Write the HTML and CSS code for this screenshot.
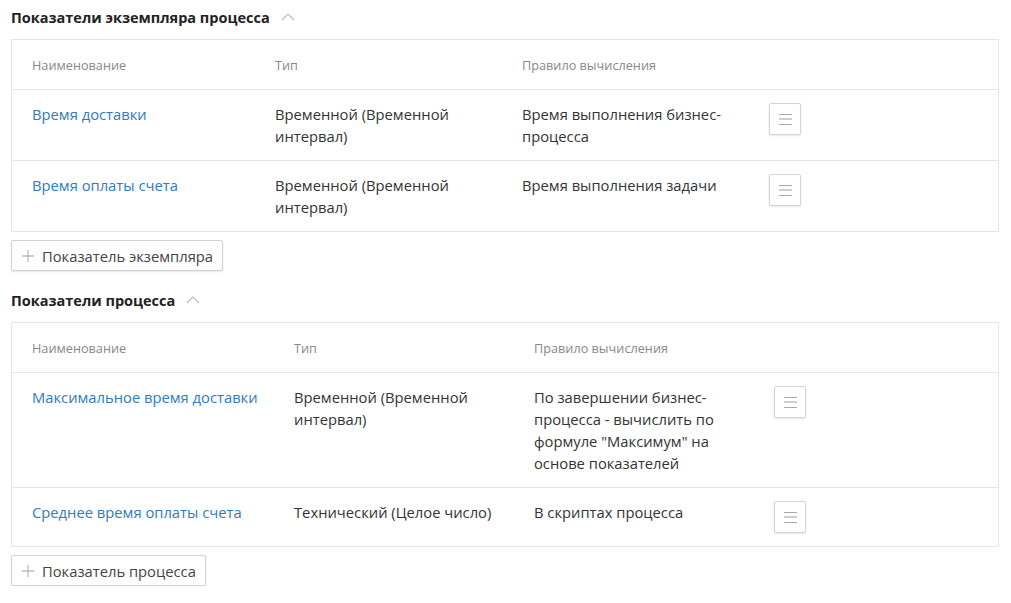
FILE: index.html
```html
<!DOCTYPE html>
<html lang="ru">
<head>
<meta charset="utf-8">
<link rel="stylesheet" href="styles.css">
</head>
<body>
<section class="section">
  <h2 class="title">Показатели экземпляра процесса
    <svg class="chev" width="14" height="8" viewBox="0 0 14 8"><path d="M1 7 L7 1 L13 7" fill="none" stroke="#bdbdbd" stroke-width="1.2"/></svg>
  </h2>
  <div class="table t1">
    <div class="row head">
      <div class="cell">Наименование</div>
      <div class="cell">Тип</div>
      <div class="cell">Правило вычисления</div>
      <div class="cell"></div>
    </div>
    <div class="row">
      <div class="cell"><a class="link" href="#">Время доставки</a></div>
      <div class="cell">Временной (Временной интервал)</div>
      <div class="cell">Время выполнения бизнес-процесса</div>
      <div class="cell act"><button class="menu"><span></span><span></span><span></span></button></div>
    </div>
    <div class="row">
      <div class="cell"><a class="link" href="#">Время оплаты счета</a></div>
      <div class="cell">Временной (Временной интервал)</div>
      <div class="cell">Время выполнения задачи</div>
      <div class="cell act"><button class="menu"><span></span><span></span><span></span></button></div>
    </div>
  </div>
  <button class="add"><svg width="12" height="12" viewBox="0 0 12 12"><path d="M6 0 V12 M0 6 H12" stroke="#bbb" stroke-width="1.3"/></svg>Показатель экземпляра</button>
</section>
<section class="section second">
  <h2 class="title">Показатели процесса
    <svg class="chev" width="14" height="8" viewBox="0 0 14 8"><path d="M1 7 L7 1 L13 7" fill="none" stroke="#bdbdbd" stroke-width="1.2"/></svg>
  </h2>
  <div class="table t2">
    <div class="row head">
      <div class="cell">Наименование</div>
      <div class="cell">Тип</div>
      <div class="cell">Правило вычисления</div>
      <div class="cell"></div>
    </div>
    <div class="row">
      <div class="cell"><a class="link" href="#">Максимальное время доставки</a></div>
      <div class="cell">Временной (Временной интервал)</div>
      <div class="cell">По завершении бизнес-процесса - вычислить по формуле "Максимум" на основе показателей</div>
      <div class="cell act"><button class="menu"><span></span><span></span><span></span></button></div>
    </div>
    <div class="row">
      <div class="cell"><a class="link" href="#">Среднее время оплаты счета</a></div>
      <div class="cell">Технический (Целое число)</div>
      <div class="cell">В скриптах процесса</div>
      <div class="cell act"><button class="menu"><span></span><span></span><span></span></button></div>
    </div>
  </div>
  <button class="add"><svg width="12" height="12" viewBox="0 0 12 12"><path d="M6 0 V12 M0 6 H12" stroke="#bbb" stroke-width="1.3"/></svg>Показатель процесса</button>
</section>
</body>
</html>
```
FILE: styles.css
```css
* { box-sizing: border-box; }
html, body { margin: 0; padding: 0; background: #fff; }
body {
  padding: 0 12px 0 11px;
  font-family: "Open Sans", "Noto Sans", sans-serif;
  font-size: 14.75px;
  line-height: 22px;
  color: #333;
}
.section { display: flex; flex-direction: column; align-items: flex-start; }
.second { margin-top: 12px; }
.title {
  margin: 0;
  height: 39px;
  padding: 7px 0 10px;
  font-size: 14.5px;
  line-height: 22px;
  font-weight: 700;
  color: #222;
  display: flex;
  align-items: center;
  gap: 11px;
}
.chev { margin-top: -3px; }
.table {
  width: 100%;
  border: 1px solid #e6e6e6;
}
.row {
  display: grid;
  border-top: 1px solid #e6e6e6;
}
.row:first-child { border-top: 0; }
.t1 .row { grid-template-columns: 243px 247px 247px 1fr; }
.t2 .row { grid-template-columns: 262px 240px 240px 1fr; }
.cell { padding: 13px 20px 13px 20px; }
.cell:first-child { padding-right: 6px; }
.head .cell {
  padding: 15px 20px 14px;
  font-size: 12.7px;
  line-height: 20px;
  color: #888;
}
.act { padding: 13px 20px 13px; }
.link { color: #2f7bbd; text-decoration: none; }
.menu {
  width: 32px;
  height: 32px;
  padding: 0;
  border: 1px solid #d4d4d4;
  border-radius: 2px;
  background: #fff;
  box-shadow: 0 1px 2px rgba(0,0,0,0.1);
  display: flex;
  flex-direction: column;
  align-items: center;
  justify-content: center;
  gap: 3.5px;
}
.menu span { display: block; width: 13px; height: 1px; background: #a8a8a8; }
.menu span:nth-child(2) { height: 2px; background: #cfcfcf; }
.add {
  margin-top: 8px;
  height: 31px;
  padding: 0 9px 0 10px;
  border: 1px solid #d2d2d2;
  border-radius: 2px;
  background: #fff;
  box-shadow: 0 1px 2px rgba(0,0,0,0.1);
  font-family: inherit;
  font-size: 14.75px;
  color: #444;
  display: flex;
  align-items: center;
  gap: 8px;
}
```
